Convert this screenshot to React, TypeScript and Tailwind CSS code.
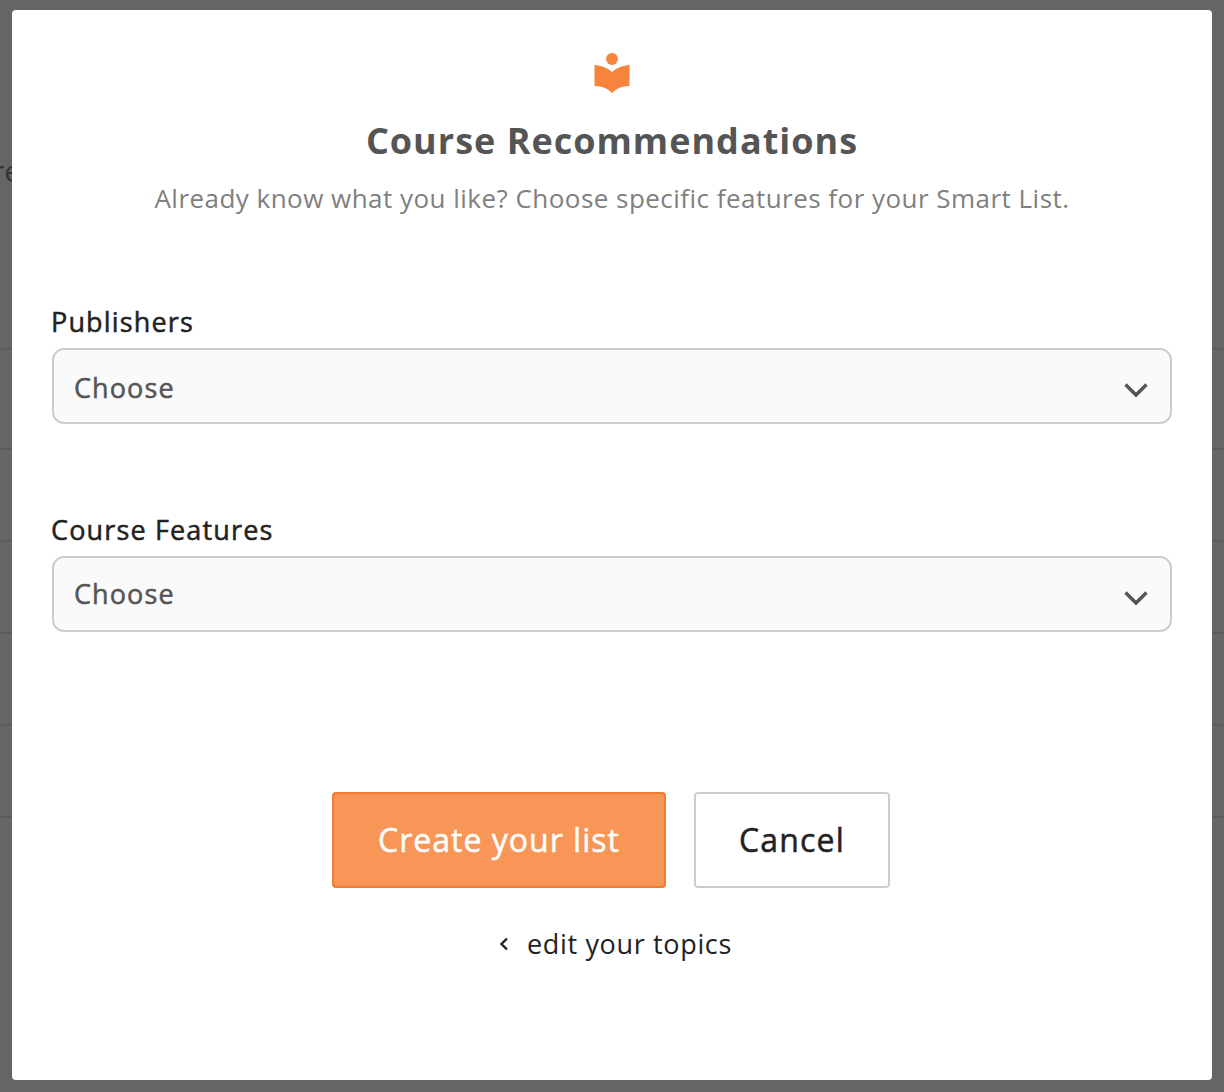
const font = "font-['Open_Sans',sans-serif]";

function Chevron({ className }: { className: string }) {
  return (
    <svg width="24" height="15" viewBox="0 0 24 15" fill="none" stroke="#555555" strokeWidth="3.4" className={className}>
      <path d="M1.5 1.5 L12 12 L22.5 1.5" />
    </svg>
  );
}

function Field({ label, className, textClass }: { label: string; className: string; textClass: string }) {
  return (
    <div className={className}>
      <label className="-ml-px block text-[27px] leading-[36px] text-[#222] tracking-[1.15px] [-webkit-text-stroke:0.5px_#222]">{label}</label>
      <div className="mt-[8px] flex h-[76px] items-center justify-between rounded-[12px] border-2 border-[#cccccc] bg-[#fafafa] pl-[20px] pr-[22px]">
        <span className={`text-[27px] text-[#555] tracking-[1.1px] [-webkit-text-stroke:0.5px_#555] ${textClass}`}>Choose</span>
        <Chevron className="mt-[8px]" />
      </div>
    </div>
  );
}

export default function App() {
  return (
    <div className={`relative h-[1092px] w-[1224px] overflow-hidden bg-[#656565] ${font}`}>
      {/* page behind the overlay */}
      <div className="pt-[348px]">
        <div className="h-[100px] border-t-2 border-[#5c5c5c]" />
        <div className="h-[92px] border-t-2 border-[#5c5c5c]" />
        <div className="h-[92px] border-t-2 border-[#5c5c5c]" />
        <div className="h-[92px] border-t-2 border-[#5c5c5c]" />
        <div className="h-[92px] border-t-2 border-[#5c5c5c]" />
        <div className="h-[92px] border-t-2 border-[#5c5c5c]" />
      </div>
      <span className="absolute left-[-8px] top-[148px] text-[30px] text-[#333]">re</span>

      {/* modal */}
      <div className="absolute left-[12px] top-[10px] flex h-[1070px] w-[1200px] flex-col items-center rounded-[4px] bg-white px-[40px]">
        <svg width="36" height="42" viewBox="0 0 36 42" className="mt-[43px]">
          <circle cx="18" cy="6" r="6" fill="#f7843c" />
          <path d="M0.5 12 C7 12.5 13 14.5 18 19 C23 14.5 29 12.5 35.5 12 V33 C28 33.5 23 35 18 40 C13 35 8 33.5 0.5 33 Z" fill="#f7843c" />
        </svg>
        <h1 className="mt-[22px] text-[36px] leading-[48px] font-bold tracking-[1px] text-[#555]">Course Recommendations</h1>
        <p className="mt-[15px] text-[26px] leading-[36px] tracking-[0.47px] text-[#808080]">
          Already know what you like? Choose specific features for your Smart List.
        </p>
        <div className="w-full">
          <Field label="Publishers" className="mt-[88px]" textClass="mt-[4px]" />
          <Field label="Course Features" className="mt-[88px]" textClass="" />
        </div>
        <div className="mt-[160px] -ml-[2px] flex gap-[28px]">
          <button className="h-[96px] w-[334px] rounded-[4px] border-2 border-[#f47c32] bg-[#f79656] text-[32px] tracking-[1px] text-white [-webkit-text-stroke:0.5px_#fff]">
            Create your list
          </button>
          <button className="h-[96px] w-[196px] rounded-[4px] border-2 border-[#cccccc] bg-white text-[32px] tracking-[1.2px] text-[#222] [-webkit-text-stroke:0.5px_#222]">
            Cancel
          </button>
        </div>
        <div className="mt-[38px] ml-[7px] flex items-center gap-[18px] text-[27px] leading-[36px] tracking-[0.65px] text-[#222]">
          <svg width="10" height="14" viewBox="0 0 10 14" fill="none" stroke="#222" strokeWidth="2.4"><path d="M8 1.5 L2.5 7 L8 12.5" /></svg>
          <span>edit your topics</span>
        </div>
      </div>
    </div>
  );
}
